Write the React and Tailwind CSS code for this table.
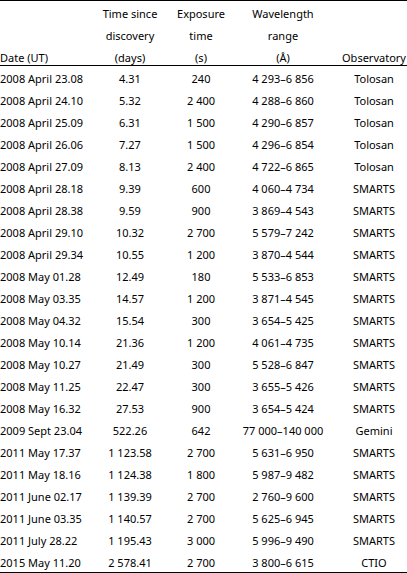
const t = (s) => s.replace(/ /g, '\u00A0');

const rows = [
  ['2008 April 23.08', '4.31', '240', '4 293–6 856', 'Tolosan'],
  ['2008 April 24.10', '5.32', '2 400', '4 288–6 860', 'Tolosan'],
  ['2008 April 25.09', '6.31', '1 500', '4 290–6 857', 'Tolosan'],
  ['2008 April 26.06', '7.27', '1 500', '4 296–6 854', 'Tolosan'],
  ['2008 April 27.09', '8.13', '2 400', '4 722–6 865', 'Tolosan'],
  ['2008 April 28.18', '9.39', '600', '4 060–4 734', 'SMARTS'],
  ['2008 April 28.38', '9.59', '900', '3 869–4 543', 'SMARTS'],
  ['2008 April 29.10', '10.32', '2 700', '5 579–7 242', 'SMARTS'],
  ['2008 April 29.34', '10.55', '1 200', '3 870–4 544', 'SMARTS'],
  ['2008 May 01.28', '12.49', '180', '5 533–6 853', 'SMARTS'],
  ['2008 May 03.35', '14.57', '1 200', '3 871–4 545', 'SMARTS'],
  ['2008 May 04.32', '15.54', '300', '3 654–5 425', 'SMARTS'],
  ['2008 May 10.14', '21.36', '1 200', '4 061–4 735', 'SMARTS'],
  ['2008 May 10.27', '21.49', '300', '5 528–6 847', 'SMARTS'],
  ['2008 May 11.25', '22.47', '300', '3 655–5 426', 'SMARTS'],
  ['2008 May 16.32', '27.53', '900', '3 654–5 424', 'SMARTS'],
  ['2009 Sept 23.04', '522.26', '642', '77 000–140 000', 'Gemini'],
  ['2011 May 17.37', '1 123.58', '2 700', '5 631–6 950', 'SMARTS'],
  ['2011 May 18.16', '1 124.38', '1 800', '5 987–9 482', 'SMARTS'],
  ['2011 June 02.17', '1 139.39', '2 700', '2 760–9 600', 'SMARTS'],
  ['2011 June 03.35', '1 140.57', '2 700', '5 625–6 945', 'SMARTS'],
  ['2011 July 28.22', '1 195.43', '3 000', '5 996–9 490', 'SMARTS'],
  ['2015 May 11.20', '2 578.41', '2 700', '3 800–6 615', 'CTIO'],
];

const head = [
  ['', '', 'Date (UT)'],
  ['Time since', 'discovery', '(days)'],
  ['Exposure', 'time', '(s)'],
  ['Wavelength', 'range', '(Å)'],
  ['', '', 'Observatory'],
];

const cols = 'grid grid-cols-[83px_94px_48px_116px_66px]';

export default function App() {
  return (
    <div className="w-[407px] bg-white text-black text-[11px] font-['Noto_Sans',sans-serif] border-t border-b border-black">
      {/* header, three stacked lines per column */}
      <div className={`${cols} h-[65px] border-b border-black items-start`}>
        {head.map((lines, i) => (
          <div key={i} className="flex flex-col pt-[2px]">
            {lines.map((l, j) => (
              <div
                key={j}
                className={`h-[22px] leading-[22px] flex whitespace-nowrap ${i === 0 ? 'justify-start' : 'justify-center'}`}
              >
                {l}
              </div>
            ))}
          </div>
        ))}
      </div>

      {rows.map((r) => (
        <div key={r[0]} className={`${cols} h-[22px]`}>
          {r.map((c, i) => (
            <div
              key={i}
              className={`flex pt-[4px] leading-[18px] whitespace-nowrap ${i === 0 ? 'justify-start' : 'justify-center'}`}
            >
              {i === 0 ? c : t(c)}
            </div>
          ))}
        </div>
      ))}
    </div>
  );
}
